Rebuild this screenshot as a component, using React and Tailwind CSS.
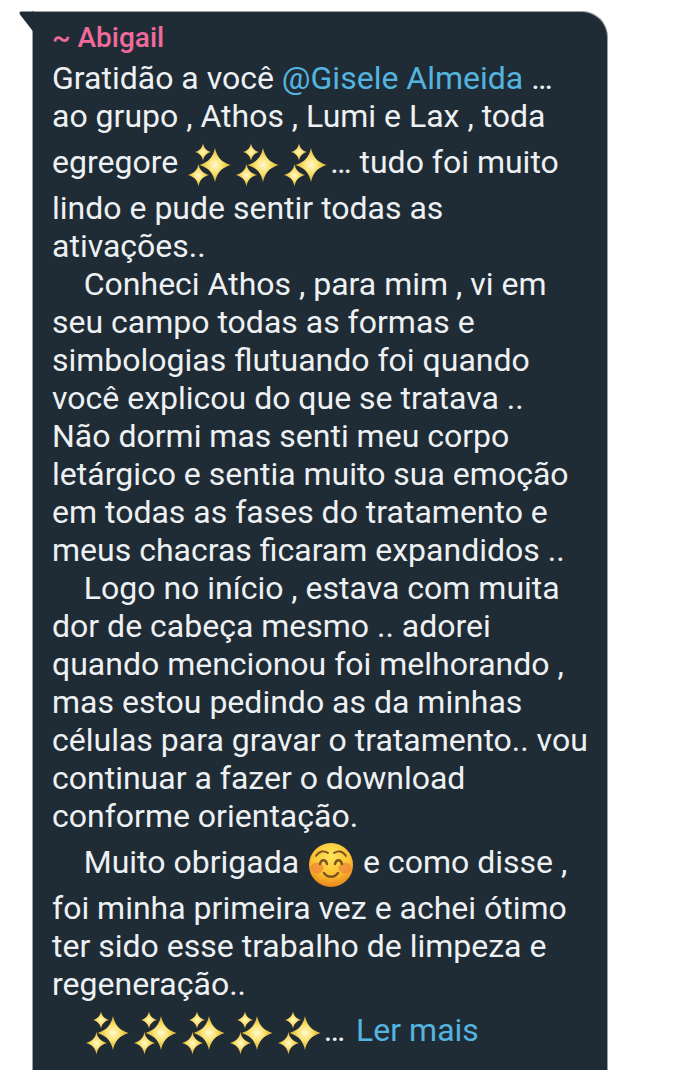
import React from "react";

const Sparkles = () => (
  <svg viewBox="0 0 44 44" className="inline-block w-[44px] h-[44px] mx-[2px] align-middle">
    <defs>
      <radialGradient id="spark" cx="50%" cy="50%" r="50%">
        <stop offset="0%" stopColor="#fff9d0" />
        <stop offset="45%" stopColor="#fbe272" />
        <stop offset="100%" stopColor="#dfae2a" />
      </radialGradient>
    </defs>
    <path d="M27 5 C29 14 33 19 42.5 22 C33 25 29 30 27 39 C25 30 21 25 11.5 22 C21 19 25 14 27 5 Z" fill="url(#spark)" />
    <path d="M15 0.5 C16 5 18 7.5 23 9 C18 10.5 16 13 15 17.5 C14 13 12 10.5 7 9 C12 7.5 14 5 15 0.5 Z" fill="url(#spark)" />
    <path d="M10.5 21 C11.6 27 14.5 30 21 32 C14.5 34 11.6 37 10.5 43.5 C9.4 37 6.5 34 0 32 C6.5 30 9.4 27 10.5 21 Z" fill="url(#spark)" />
  </svg>
);

const Smile = () => (
  <svg viewBox="0 0 44 44" className="inline-block w-[44px] h-[44px] mx-[2px] align-middle">
    <defs>
      <radialGradient id="face" cx="50%" cy="30%" r="70%">
        <stop offset="0%" stopColor="#fde55a" />
        <stop offset="60%" stopColor="#fcc232" />
        <stop offset="100%" stopColor="#e8861a" />
      </radialGradient>
    </defs>
    <circle cx="22" cy="22" r="22" fill="url(#face)" />
    <ellipse cx="8" cy="25" rx="6.5" ry="5.5" fill="#f0843a" opacity="0.7" />
    <ellipse cx="36" cy="25" rx="6.5" ry="5.5" fill="#f0843a" opacity="0.7" />
    <g fill="none" stroke="#7d5420" strokeLinecap="round">
      <path d="M7 13 C10 8 15 7 19 10" strokeWidth="1.8" />
      <path d="M25 10 C29 7 34 8 37 13" strokeWidth="1.8" />
      <path d="M11 21 C12 16 17 16 18 21" strokeWidth="2.4" />
      <path d="M26 21 C27 16 32 16 33 21" strokeWidth="2.4" />
      <path d="M15 30 C18.5 35 25.5 35 29 30" strokeWidth="2.4" />
    </g>
  </svg>
);

const Row = ({ children, tall }) => (
  <div className={`whitespace-pre ${tall ? "leading-[54px] h-[54px]" : "leading-[38px] h-[38px]"}`}>{children}</div>
);

const plainA = [
  "lindo e pude sentir todas as",
  "ativações..",
  "    Conheci Athos , para mim , vi em",
  "seu campo todas as formas e",
  "simbologias flutuando foi quando",
  "você explicou do que se tratava ..",
  "Não dormi mas senti meu corpo",
  "letárgico e sentia muito sua emoção",
  "em todas as fases do tratamento e",
  "meus chacras ficaram expandidos ..",
  "    Logo no início , estava com muita",
  "dor de cabeça mesmo .. adorei",
  "quando mencionou foi melhorando ,",
  "mas estou pedindo as da minhas",
  "células para gravar o tratamento.. vou",
  "continuar a fazer o download",
  "conforme orientação.",
];

const plainB = [
  "foi minha primeira vez e achei ótimo",
  "ter sido esse trabalho de limpeza e",
  "regeneração..",
];

export default function App() {
  return (
    <div className="w-[692px] h-[1078px] bg-white pt-[11px] overflow-hidden font-['Roboto',sans-serif]">
      <div className="relative ml-[32px] w-[576px] h-[1059px] bg-[#202c35] rounded-tr-[26px] border-r border-l border-t border-[#9aa0a5] pl-[19px] pt-[6px] text-[#eef1f3] text-[32px]">
        {/* tail */}
        <svg viewBox="0 0 15 22" className="absolute left-[-14px] top-[-1px] w-[15px] h-[22px]">
          <path d="M14.5 21 L1 3.5 Q-0.5 0.5 2.5 0.5 L15 0.5 L15 21 Z" fill="#202c35" />
        </svg>

        <div className="h-[41px] leading-[40px] text-[#f06a9c] text-[28px] font-medium">~ Abigail</div>

        <Row>
          Gratidão a você <span className="text-[#54b4e0]">@Gisele Almeida</span> …
        </Row>
        <Row>ao grupo , Athos , Lumi e Lax , toda</Row>
        <Row tall>
          egregore <Sparkles />
          <Sparkles />
          <Sparkles />… tudo foi muito
        </Row>
        {plainA.map((line) => (
          <Row key={line}>{line}</Row>
        ))}
        <Row tall>
          {"    Muito obrigada "}
          <Smile /> e como disse ,
        </Row>
        {plainB.map((line) => (
          <Row key={line}>{line}</Row>
        ))}
        <Row tall>
          {"    "}
          <Sparkles />
          <Sparkles />
          <Sparkles />
          <Sparkles />
          <Sparkles />… <span className="ml-[3px] text-[#54b4e0]">Ler mais</span>
        </Row>
      </div>
    </div>
  );
}
